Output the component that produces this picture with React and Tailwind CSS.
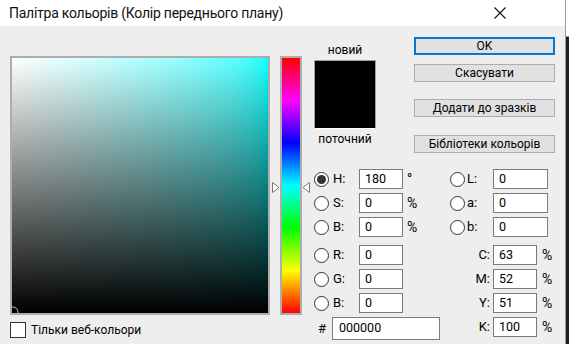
import React from "react";

const font = { fontFamily: 'Roboto, "Noto Sans", sans-serif' };

function Radio({ checked }) {
  return (
    <div className="w-[15px] h-[15px] shrink-0 rounded-full border border-[#333] bg-white flex items-center justify-center">
      {checked && <div className="w-[9px] h-[9px] rounded-full bg-[#333]" />}
    </div>
  );
}

function Field({ value, w = "w-[44px]" }) {
  return (
    <div className={`${w} h-[20px] shrink-0 border border-[#7a7a7a] bg-white flex items-center pl-[5px] text-[12.5px] text-black`}>
      {value}
    </div>
  );
}

function Btn({ children, primary, className = "" }) {
  return (
    <div
      className={`h-[18px] w-[141px] flex items-center justify-center bg-[#e1e1e1] text-[12px] text-black ${
        primary ? "border-2 border-[#0078d7]" : "border border-[#adadad]"
      } ${className}`}
    >
      {children}
    </div>
  );
}

function LeftRow({ checked, label, value, unit }) {
  return (
    <div className="w-[136px] flex items-center shrink-0">
      <Radio checked={checked} />
      <span className="ml-[4px] w-[22px] text-[13px]">{label}</span>
      <div className="ml-[4px]">
        <Field value={value} />
      </div>
      {unit && <span className="ml-[4px] text-[14px] leading-none">{unit}</span>}
    </div>
  );
}

function LabRow({ label, value }) {
  return (
    <div className="flex items-center">
      <Radio />
      <span className="ml-[2px] w-[22px] text-[13px]">{label}</span>
      <div className="ml-[4px]">
        <Field value={value} w="w-[55px]" />
      </div>
    </div>
  );
}

function CmykRow({ label, value }) {
  return (
    <div className="flex items-center">
      <span className="w-[40px] text-right text-[13px]">{label}</span>
      <div className="ml-[3px]">
        <Field value={value} />
      </div>
      <span className="ml-[5px] text-[14px] leading-none">%</span>
    </div>
  );
}

export default function App() {
  return (
    <div className="w-[569px] h-[344px] flex overflow-hidden bg-[#1f1f1f] text-black" style={font}>
      <div className="w-[566px] h-full shrink-0 flex flex-col bg-[#eeeeee] border-r border-[#9a9a9a]">
        {/* title bar */}
        <div className="h-[26px] bg-white flex items-center pl-[9px] shrink-0">
          <span className="text-[14px] tracking-[-0.25px] leading-none text-[#111]">Палітра кольорів (Колір переднього плану)</span>
          <svg className="ml-auto mr-[59px]" width="12" height="12" viewBox="0 0 12 12">
            <path d="M0.5 0.5 L11.5 11.5 M11.5 0.5 L0.5 11.5" stroke="#111" strokeWidth="1.1" fill="none" />
          </svg>
        </div>

        <div className="flex flex-1 pl-[10px]">
          {/* colour field */}
          <div className="w-[260px] flex flex-col pt-[30px]">
            <div className="h-[259px] border-2 border-[#adadad] bg-gradient-to-r from-white to-[#00ffff] relative overflow-hidden">
              <div className="absolute inset-0 bg-gradient-to-t from-black to-transparent" />
              <svg className="absolute left-0 bottom-0" width="10" height="10" viewBox="0 0 10 10">
                <circle cx="1" cy="9" r="5" fill="none" stroke="#bbb" strokeWidth="1" />
              </svg>
            </div>
            <div className="mt-[6px] flex items-center">
              <div className="w-[16px] h-[16px] border border-[#333] bg-white" />
              <span className="ml-[5px] text-[12px]">Тільки веб-кольори</span>
            </div>
          </div>

          {/* hue bar */}
          <div className="ml-[2px] flex pt-[30px]">
            <svg className="mt-[126px]" width="8" height="11" viewBox="0 0 8 11">
              <path d="M0.5 0.5 L7 5.5 L0.5 10.5 Z" fill="#fff" stroke="#777" strokeWidth="1" />
            </svg>
            <div className="w-[22px] h-[259px] border-2 border-[#adadad] bg-[linear-gradient(to_bottom,#ff0000,#ff00ff,#0000ff,#00ffff,#00ff00,#ffff00,#ff0000)]" />
            <svg className="mt-[126px]" width="8" height="11" viewBox="0 0 8 11">
              <path d="M7.5 0.5 L1 5.5 L7.5 10.5 Z" fill="#fff" stroke="#777" strokeWidth="1" />
            </svg>
          </div>

          {/* right part */}
          <div className="ml-[4px] flex flex-col pt-[11px]">
            <div className="flex">
              <div className="w-[62px] mt-[6px] flex flex-col items-center">
                <span className="h-[14px] leading-[14px] text-[12px]">новий</span>
                <div className="mt-[3px] w-[62px] h-[69px] bg-black border border-[#a0a0a0] border-b-white" />
                <span className="mt-[3px] h-[14px] leading-[14px] text-[12px]">поточний</span>
              </div>
              <div className="ml-[38px] flex flex-col">
                <Btn primary>OK</Btn>
                <Btn className="mt-[9px]">Скасувати</Btn>
                <Btn className="mt-[17px]">Додати до зразків</Btn>
                <Btn className="mt-[18px]">Бібліотеки кольорів</Btn>
              </div>
            </div>

            <div className="mt-[16px] flex flex-col">
              <div className="flex items-center">
                <LeftRow checked label="H:" value="180" unit="°" />
                <LabRow label="L:" value="0" />
              </div>
              <div className="mt-[4px] flex items-center">
                <LeftRow label="S:" value="0" unit="%" />
                <LabRow label="a:" value="0" />
              </div>
              <div className="mt-[4px] flex items-center">
                <LeftRow label="B:" value="0" unit="%" />
                <LabRow label="b:" value="0" />
              </div>
              <div className="mt-[8px] flex items-center">
                <LeftRow label="R:" value="0" />
                <CmykRow label="C:" value="63" />
              </div>
              <div className="mt-[4px] flex items-center">
                <LeftRow label="G:" value="0" />
                <CmykRow label="M:" value="52" />
              </div>
              <div className="mt-[4px] flex items-center">
                <LeftRow label="B:" value="0" />
                <CmykRow label="Y:" value="51" />
              </div>
              <div className="mt-[4px] flex items-start">
                <div className="w-[136px] flex items-center shrink-0">
                  <span className="ml-[4px] w-[14px] text-[13px]">#</span>
                  <div className="w-[108px] h-[23px] border border-[#7a7a7a] bg-white flex items-center pl-[6px] text-[12.5px]">
                    000000
                  </div>
                </div>
                <CmykRow label="K:" value="100" />
              </div>
            </div>
          </div>
        </div>
      </div>
      <div className="flex-1 flex flex-col">
        <div className="h-[36px] bg-white" />
        <div className="h-px bg-[#3cc]" />
        <div className="flex-1 bg-[#1f1f1f]" />
      </div>
    </div>
  );
}
